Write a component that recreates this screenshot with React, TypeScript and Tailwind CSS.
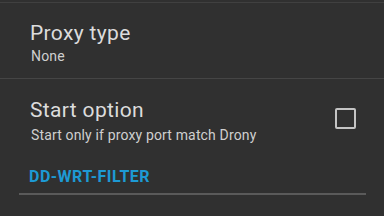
export default function App() {
  return (
    <div
      className="w-[384px] h-[216px] overflow-hidden bg-[#303030] pt-[2px]"
      style={{ fontFamily: "Roboto, 'Noto Sans', sans-serif" }}
    >
      {/* Proxy type */}
      <div className="h-[76px] border-t border-[#404040] pl-[30px] pt-[18px]">
        <div className="text-[21px] leading-[24px] tracking-[0.35px] text-[#dcdcdc]">Proxy type</div>
        <div className="mt-[3px] pl-[1px] text-[14px] leading-[16px] tracking-[0.2px] text-[#cfcfcf]">None</div>
      </div>
      <div className="h-px bg-[#454545]" />

      {/* Start option */}
      <div className="flex justify-between pl-[30px] pr-[28px] pt-[19px]">
        <div>
          <div className="text-[21px] leading-[24px] tracking-[0.35px] text-[#dcdcdc]">Start option</div>
          <div className="mt-[5px] pl-[1px] text-[14px] leading-[16px] tracking-[0.15px] text-[#cfcfcf]">
            Start only if proxy port match Drony
          </div>
        </div>
        <div className="mt-[10px] h-[21px] w-[21px] rounded-[2px] border-2 border-[#c4c4c4]" />
      </div>

      {/* Section header */}
      <div className="mx-[19px] mt-[24px] w-[347px]">
        <div className="pl-[10px] text-[16px] font-bold leading-[20px] tracking-[0.5px] text-[#1d9ad4]">
          DD-WRT-FILTER
        </div>
        <div className="mt-[6px] h-[2px] bg-[#5a5a5a]" />
      </div>
    </div>
  );
}
